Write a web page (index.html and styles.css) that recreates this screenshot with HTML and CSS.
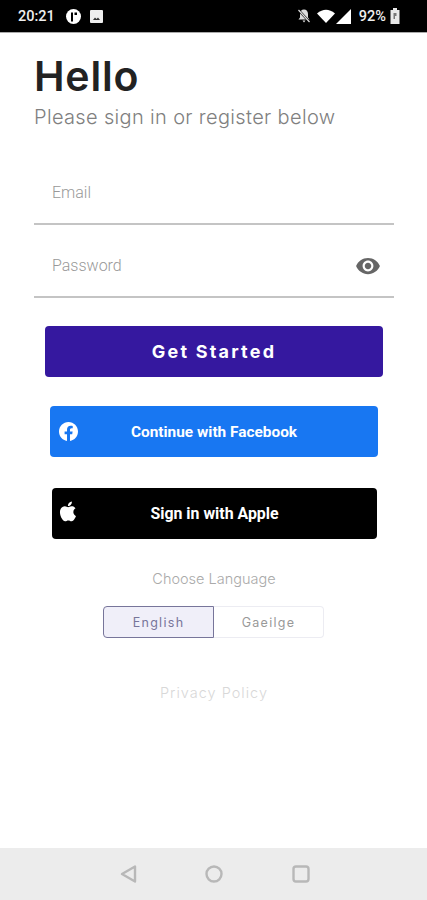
FILE: index.html
```html
<!DOCTYPE html>
<html lang="en">
<head>
    <meta charset="UTF-8">
    <meta name="viewport" content="width=device-width, initial-scale=1.0">
    <title>Sign in</title>
    <link rel="stylesheet" href="styles.css">
</head>
<body>
    <!-- Status bar -->
    <div class="status-bar">
        <div class="status-left">
            <span class="clock">20:21</span>
            <svg class="icon-f" width="17" height="17" viewBox="0 0 17 17"><circle cx="8.5" cy="8.5" r="7.5" fill="#fff"/><path d="M6 4.500h2v9H6zM9.500 4.500h2.500v2.500H9.500z" fill="#000"/></svg>
            <svg class="icon-pic" width="13" height="13" viewBox="0 0 13 13"><rect width="13" height="13" rx="1" fill="#eee"/><path d="M3 10l2-2.500 1.500 1.500 1.500-1.500 2 2.500z" fill="#333"/></svg>
        </div>
        <div class="status-right">
            <svg width="16" height="16" viewBox="0 0 16 16"><path d="M8 1.500c-2.500 0-4 2-4 4.500v3.500L2.500 11.500h11L12 9.500V6c0-2.500-1.500-4.500-4-4.500zM6.500 12.500h3L8 14.500z" fill="#ddd"/><path d="M2 1.500l12 13" stroke="#000" stroke-width="2.400"/><path d="M2.500 2l11 12" stroke="#ddd" stroke-width="1.200"/></svg>
            <svg class="icon-wifi" width="18" height="14" viewBox="0 0 18 14"><path d="M0 4.500Q9-3 18 4.500L9 14z" fill="#fff"/></svg>
            <svg class="icon-signal" width="15" height="15" viewBox="0 0 15 15"><path d="M15 0v15H0z" fill="#fff"/></svg>
            <span class="battery-text">92%</span>
            <svg width="10" height="16" viewBox="0 0 10 16"><path d="M3 0h4v2h2.500v14H.5V2H3z" fill="#e8e8e8"/><path d="M3.500 5h3v3h-1.500v3h-1.500z" fill="#777"/></svg>
        </div>
    </div>

    <div class="content">
        <h1>Hello</h1>
        <p class="subtitle">Please sign in or register below</p>

        <div class="field field-email">
            <span class="placeholder">Email</span>
        </div>
        <div class="field">
            <span class="placeholder">Password</span>
            <svg width="26" height="26" viewBox="0 0 24 24"><path d="M12 4.500C7 4.500 2.730 7.610 1 12c1.730 4.390 6 7.500 11 7.500s9.270-3.110 11-7.500c-1.730-4.390-6-7.500-11-7.500zM12 17c-2.760 0-5-2.240-5-5s2.240-5 5-5 5 2.240 5 5-2.240 5-5 5zm0-8c-1.660 0-3 1.340-3 3s1.340 3 3 3 3-1.340 3-3-1.340-3-3-3z" fill="#666"/></svg>
        </div>

        <button class="btn-primary">Get Started</button>

        <button class="btn-social btn-facebook">
            <svg class="social-icon" width="19" height="19" viewBox="0 0 24 24"><path d="M24 12.070C24 5.400 18.630 0 12 0S0 5.400 0 12.070c0 6.030 4.390 11.020 10.130 11.930v-8.440H7.080v-3.490h3.050V9.410c0-3.020 1.790-4.690 4.530-4.690 1.310 0 2.690.24 2.690.24v2.970h-1.510c-1.490 0-1.960.93-1.960 1.890v2.250h3.330l-.53 3.490h-2.800V24C19.610 23.090 24 18.100 24 12.070z" fill="#fff"/></svg>
            Continue with Facebook
        </button>

        <button class="btn-social btn-apple">
            <svg class="apple-icon" width="23" height="23" viewBox="0 0 24 24"><path d="M17.050 12.540c-.03-2.600 2.120-3.850 2.220-3.910-1.210-1.770-3.090-2.010-3.760-2.040-1.600-.16-3.120.94-3.930.94-.81 0-2.060-.92-3.390-.89-1.740.03-3.350 1.010-4.250 2.570-1.810 3.140-.46 7.800 1.300 10.350.86 1.250 1.890 2.650 3.240 2.600 1.300-.05 1.790-.84 3.360-.84 1.570 0 2.010.84 3.390.81 1.400-.02 2.280-1.270 3.140-2.530.99-1.450 1.400-2.850 1.420-2.930-.03-.01-2.710-1.040-2.740-4.130zM14.470 4.900c.72-.87 1.200-2.080 1.070-3.280-1.030.04-2.280.69-3.020 1.550-.66.770-1.240 2-1.090 3.180 1.150.09 2.320-.58 3.040-1.450z" fill="#fff"/></svg>
            Sign in with Apple
        </button>

        <p class="language-label">Choose Language</p>
        <div class="language-toggle">
            <div class="lang lang-active">English</div>
            <div class="lang">Gaeilge</div>
        </div>

        <p class="privacy">Privacy Policy</p>
    </div>

    <!-- Android nav -->
    <div class="nav-bar">
        <svg width="20" height="20" viewBox="0 0 20 20"><path d="M18 2.500v15L5 10z" fill="none" stroke="#b8b8b8" stroke-width="2.400" stroke-linejoin="round"/></svg>
        <svg width="20" height="20" viewBox="0 0 20 20"><circle cx="10" cy="10" r="7.500" fill="none" stroke="#b8b8b8" stroke-width="2.400"/></svg>
        <svg width="20" height="20" viewBox="0 0 20 20"><rect x="2.500" y="2.500" width="15" height="15" rx="2.500" fill="none" stroke="#b8b8b8" stroke-width="2.400"/></svg>
    </div>
</body>
</html>
```

FILE: styles.css
```css
* {
    box-sizing: border-box;
}

body {
    margin: 0;
    height: 900px;
    display: flex;
    flex-direction: column;
    overflow: hidden;
    background-color: #fff;
    font-family: "Inter", "Liberation Sans", sans-serif;
}

.status-bar {
    height: 33px;
    flex-shrink: 0;
    display: flex;
    justify-content: space-between;
    align-items: center;
    padding: 0 27px 0 18px;
    background-color: #000;
    border-bottom: 1px solid #aaa;
    color: #eee;
    font-family: "Roboto", sans-serif;
    font-size: 14.500px;
    font-weight: 500;
}

.status-left, .status-right {
    display: flex;
    align-items: center;
}

.icon-f {
    margin-left: 10px;
}

.icon-pic {
    margin-left: 8px;
}

.icon-wifi {
    margin-left: 5px;
    margin-right: 1px;
}

.battery-text {
    margin-left: 8px;
    margin-right: 4px;
}

.content {
    flex: 1;
    padding: 0 33px 0 34px;
    display: flex;
    flex-direction: column;
}

h1 {
    margin: 18px 0 0;
    font-size: 41px;
    line-height: 50px;
    font-weight: 600;
    letter-spacing: 0.800px;
    color: #222;
}

.subtitle {
    margin: 3px 0 0;
    font-size: 20px;
    line-height: 26px;
    font-weight: 300;
    letter-spacing: 0.340px;
    color: #808080;
}

.field {
    height: 73px;
    display: flex;
    justify-content: space-between;
    align-items: center;
    padding: 10px 13px 0 18px;
    border-bottom: 2px solid #c4c4c4;
}

.field-email {
    margin-top: 22px;
}

.placeholder {
    font-family: "Roboto", sans-serif;
    font-size: 16px;
    font-weight: 300;
    color: #999;
}

.btn-primary {
    display: block;
    height: 51px;
    width: 338px;
    margin: 28px 0 0 11px;
    border: none;
    border-radius: 4px;
    background-color: #35189f;
    color: #fff;
    font-family: "Inter", sans-serif;
    font-size: 18px;
    font-weight: 700;
    letter-spacing: 2.200px;
}

.btn-social {
    position: relative;
    display: block;
    height: 51px;
    border: none;
    border-radius: 4px;
    color: #fff;
    font-family: "Roboto", sans-serif;
    font-weight: 700;
    text-align: center;
}

.social-icon {
    position: absolute;
    left: 9px;
    top: 16px;
}

.apple-icon {
    position: absolute;
    left: 5px;
    top: 12px;
}

.btn-facebook {
    width: 328px;
    margin: 29px 0 0 16px;
    font-size: 15.400px;
    background-color: #1877f2;
}

.btn-apple {
    width: 325px;
    margin: 31px 0 0 18px;
    font-size: 15.900px;
    background-color: #000;
}

.language-label {
    margin: 30px 0 0;
    line-height: 20px;
    text-align: center;
    font-size: 14.500px;
    font-weight: 300;
    color: #aaa;
}

.language-toggle {
    display: flex;
    width: 221px;
    height: 32px;
    margin: 17px 0 0 69px;
}

.lang {
    flex: 1;
    display: flex;
    align-items: center;
    justify-content: center;
    font-size: 12.500px;
    font-weight: 400;
    letter-spacing: 1.300px;
    color: #999;
    border: 1px solid #ececf2;
    border-left: none;
    border-radius: 0 4px 4px 0;
}

.lang-active {
    border: 1px solid #77759a;
    border-radius: 4px 0 0 4px;
    background-color: #f0eff9;
    color: #77759a;
}

.privacy {
    margin: 45px 0 0;
    line-height: 20px;
    text-align: center;
    font-size: 14.500px;
    font-weight: 300;
    letter-spacing: 1px;
    color: #d8d8d8;
}

.nav-bar {
    height: 52px;
    flex-shrink: 0;
    display: flex;
    justify-content: center;
    gap: 67px;
    padding-top: 16px;
    background-color: #ececec;
}
```
